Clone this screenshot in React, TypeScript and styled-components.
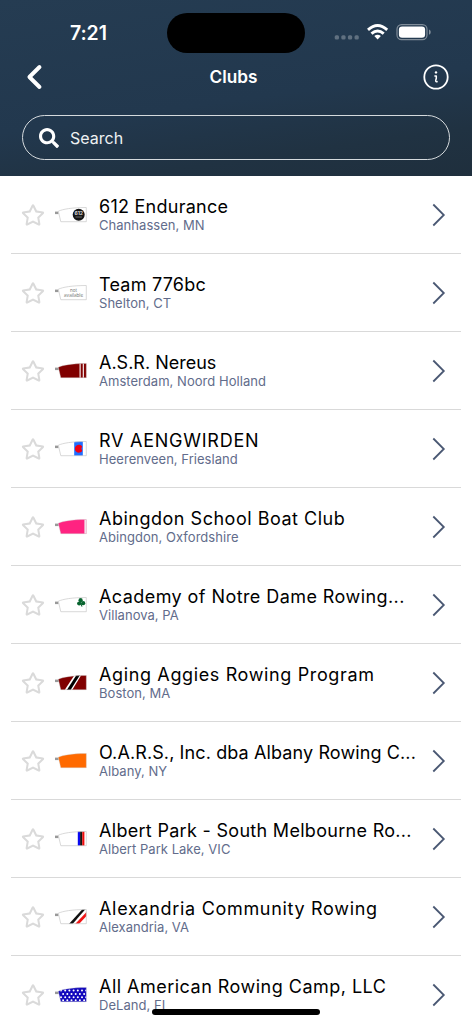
import React from "react";
import styled, { createGlobalStyle } from "styled-components";
import { FaRegStar, FaSearch } from "react-icons/fa";

const GlobalStyle = createGlobalStyle`
  *, *::before, *::after { box-sizing: border-box; }
  html, body { margin: 0; padding: 0; overflow: hidden; }
  body { background: #fff; font-family: Inter, "Liberation Sans", sans-serif; }
`;

const Screen = styled.div`
  position: relative;
  width: 472px;
  height: 1024px;
  overflow: hidden;
  background: #fff;
`;

const Header = styled.header`
  height: 176px;
  padding-top: 12px;
  color: #fff;
  background: linear-gradient(172deg, #253c52 0%, #22384e 55%, #203242 80%, #1f2f3d 100%);
`;

const StatusBar = styled.div`
  display: grid;
  grid-template-columns: 167px 138px 1fr;
  height: 41px;
  align-items: center;
`;

const Clock = styled.time`
  padding-left: 70px;
  font-size: 19.5px;
  font-weight: 600;
  line-height: 24px;
  letter-spacing: -0.1px;
`;

const Island = styled.div`
  height: 40px;
  border-radius: 20px;
  background: #000;
  align-self: center;
`;

const StatusIcons = styled.div`
  display: flex;
  align-items: center;
  padding-left: 29px;
`;

const NavBar = styled.nav`
  display: grid;
  grid-template-columns: 1fr auto 1fr;
  align-items: center;
  height: 48px;
  padding: 0 22px 0 26px;
`;

const NavButton = styled.button<{ $end?: boolean }>`
  display: flex;
  padding: 0;
  border: 0;
  color: inherit;
  background: none;
  justify-self: ${({ $end }) => ($end ? "end" : "start")};
`;

const Title = styled.h1`
  margin: 0 9px 0 0;
  font-size: 17.2px;
  font-weight: 600;
  line-height: 24px;
`;

const SearchField = styled.div`
  display: flex;
  align-items: center;
  height: 45px;
  margin: 14px 22px 0;
  padding-left: 16px;
  gap: 11px;
  border: 1.5px solid #d5dadd;
  border-radius: 23px;
`;

const SearchLabel = styled.span`
  font-size: 16px;
  line-height: 22px;
  color: #eef1f3;
`;

const List = styled.ul`
  margin: 0;
  padding: 0 11px;
  list-style: none;
`;

const Row = styled.li`
  display: flex;
  align-items: center;
  height: 78px;
  padding: 0 15px 0 10px;
  border-bottom: 1px solid #d9d9d9;
`;

const Star = styled(FaRegStar)`
  flex: none;
  width: 24px;
  height: 24px;
  color: #dadada;
`;

const BladeSvg = styled.svg`
  flex: none;
  width: 32px;
  height: 16px;
  margin: 0 12px 0 10px;
`;

const Details = styled.div`
  flex: 1;
  min-width: 0;
  padding-top: 2px;
  white-space: nowrap;
`;

const Name = styled.div<{ $tracking: number }>`
  font-size: 18px;
  font-weight: 400;
  line-height: 20px;
  letter-spacing: ${({ $tracking }) => $tracking}px;
  color: #000;
`;

const Place = styled.div`
  font-size: 13px;
  line-height: 17px;
  letter-spacing: 0.04px;
  color: #626c8b;
`;

const Chevron = styled.svg`
  flex: none;
  width: 14px;
  height: 24px;
`;

const HomeIndicator = styled.div`
  position: absolute;
  left: 152px;
  top: 1009px;
  width: 168px;
  height: 6px;
  border-radius: 3px;
  background: #000;
`;

const outline = "M3.3 4.2 C8 2.2 16 .6 31.3 .5 V14.7 H5.8 Z";

type Club = {
  id: string;
  name: string;
  place: string;
  track: number;
  fill: string;
  art?: React.ReactNode;
};

function Blade({ id, fill, art }: Pick<Club, "id" | "fill" | "art">) {
  return (
    <BladeSvg viewBox="0 0 32 16">
      <clipPath id={id}>
        <path d={outline} />
      </clipPath>
      <rect x="0" y="4.6" width="3.6" height="2.5" fill="#999" />
      <path d={outline} fill={fill} />
      <g clipPath={`url(#${id})`}>{art}</g>
      <path d={outline} fill="none" stroke="#c9c9c9" strokeWidth=".7" opacity={fill === "#fff" ? 1 : 0.5} />
    </BladeSvg>
  );
}

const dots = [3.6, 6.9, 10.2, 13.2].flatMap((y, r) =>
  Array.from({ length: 7 }, (_, i) => (
    <circle key={`${r}-${i}`} cx={6 + i * 4.2 + (r % 2) * 2.1} cy={y} r="1" fill="#fff" />
  ))
);

const clubs: Club[] = [
  {
    id: "endurance", name: "612 Endurance", place: "Chanhassen, MN", track: 0.25, fill: "#fff",
    art: (
      <>
        <circle cx="23.7" cy="7.8" r="6" fill="#151515" />
        <text x="23.7" y="8.2" fontSize="5" fontWeight="700" textAnchor="middle" fill="#ddd">612</text>
        <path d="M20.5 10h6.4" stroke="#aaa" strokeWidth=".6" />
      </>
    ),
  },
  {
    id: "team", name: "Team 776bc", place: "Shelton, CT", track: 0.22, fill: "#fff",
    art: (
      <g fontSize="4.6" textAnchor="middle" fill="#777">
        <text x="18.6" y="6.6">not</text>
        <text x="18.6" y="12.3">available</text>
      </g>
    ),
  },
  {
    id: "nereus", name: "A.S.R. Nereus", place: "Amsterdam, Noord Holland", track: 0, fill: "#800000",
    art: <path d="M25.1 0v16M28.3 0v16" stroke="#fff" strokeWidth="1.1" />,
  },
  {
    id: "aengwirden", name: "RV AENGWIRDEN", place: "Heerenveen, Friesland", track: 0.75, fill: "#fff",
    art: (
      <>
        <rect x="19.2" width="8.6" height="16" fill="#1f6dff" />
        <path d="M27.2 5.4A4 4 0 1 0 27.2 9.9L26.3 7.6Z" fill="#f00014" />
      </>
    ),
  },
  {
    id: "abingdon", name: "Abingdon School Boat Club", place: "Abingdon, Oxfordshire", track: 0.51, fill: "#ff2381",
    art: <rect x="29.4" width="3" height="16" fill="#f4e5ec" />,
  },
  {
    id: "academy", name: "Academy of Notre Dame Rowing...", place: "Villanova, PA", track: 0.43, fill: "#fff",
    art: (
      <g fill="#08642f">
        <circle cx="25.6" cy="3.2" r="2.1" />
        <circle cx="24.2" cy="6.5" r="2.1" />
        <circle cx="28.2" cy="6.2" r="2.1" />
        <path d="M26 5l1.5 4.5-.9.3L25 6z" />
      </g>
    ),
  },
  {
    id: "aggies", name: "Aging Aggies Rowing Program", place: "Boston, MA", track: 0.63, fill: "#800000",
    art: (
      <>
        <path d="M9 16L19.5 0h6.8L16.6 16z" fill="#fff" />
        <path d="M11.2 16L21.5 0h3.5L14.9 16z" fill="#000" />
      </>
    ),
  },
  { id: "oars", name: "O.A.R.S., Inc. dba Albany Rowing C...", place: "Albany, NY", track: 0.11, fill: "#ff6a00" },
  {
    id: "albert", name: "Albert Park - South Melbourne Ro...", place: "Albert Park Lake, VIC", track: 0.3, fill: "#fff",
    art: (
      <>
        <rect x="22.8" width="2.3" height="16" fill="#0808f0" />
        <rect x="25.1" width="2.2" height="16" fill="#111" />
        <rect x="27.3" width="2.1" height="16" fill="#f00a0a" />
      </>
    ),
  },
  {
    id: "alexandria", name: "Alexandria Community Rowing", place: "Alexandria, VA", track: 0.69, fill: "#fff",
    art: (
      <>
        <path d="M13 16L27.6 0h3L16.7 16z" fill="#111" />
        <path d="M19.2 16L32 2.6v4L23 16z" fill="#f01515" />
      </>
    ),
  },
  { id: "american", name: "All American Rowing Camp, LLC", place: "DeLand, FL", track: 0.48, fill: "#1208bd", art: dots },
];

export default function App() {
  return (
    <>
      <GlobalStyle />
      <Screen>
        <Header>
          <StatusBar>
            <Clock>7:21</Clock>
            <Island />
            <StatusIcons>
              <svg width="102" height="20" viewBox="0 0 102 20">
                <g fill="#fff" opacity=".28">
                  <rect x=".7" y="12.2" width="4.3" height="4.3" rx="1.5" />
                  <rect x="7.3" y="12.2" width="4.3" height="4.3" rx="1.5" />
                  <rect x="13.9" y="12.2" width="4.3" height="4.3" rx="1.5" />
                  <rect x="20.5" y="12.2" width="4.3" height="4.3" rx="1.5" />
                </g>
                <g fill="none" stroke="#fff" strokeWidth="2.9">
                  <path d="M34 6.8Q43.6-1.8 53.2 6.8" />
                  <path d="M37.5 10.6Q43.6 5.2 49.7 10.6" />
                </g>
                <path d="M40.3 13.1Q43.6 10.4 46.9 13.1L43.6 16.6Z" fill="#fff" />
                <rect x="63" y="1.6" width="30" height="15" rx="4.6" fill="none" stroke="#fff" strokeOpacity=".42" strokeWidth="1.2" />
                <rect x="64.9" y="3.4" width="26.2" height="11.4" rx="3.2" fill="#fff" />
                <path d="M95.1 6.6c2 .8 2 4.4 0 5.2z" fill="#fff" opacity=".5" />
              </svg>
            </StatusIcons>
          </StatusBar>
          <NavBar>
            <NavButton aria-label="Back">
              <svg width="18" height="28" viewBox="0 0 18 28">
                <path d="M13.5 4L3.4 14l10.1 10" fill="none" stroke="#fff" strokeWidth="3.9" strokeLinecap="round" strokeLinejoin="round" />
              </svg>
            </NavButton>
            <Title>Clubs</Title>
            <NavButton $end aria-label="Information">
              <svg width="28" height="28" viewBox="0 0 28 28" fill="none" stroke="#fff">
                <circle cx="14" cy="14" r="11.7" strokeWidth="1.8" />
                <circle cx="14" cy="9.4" r="1.2" fill="#fff" stroke="none" />
                <path d="M12.4 12.9h1.9v2.3l-.6 2.3q-.2 1.6 2 1.1" strokeWidth="1.5" strokeLinejoin="round" />
              </svg>
            </NavButton>
          </NavBar>
          <SearchField role="search">
            <FaSearch size={20} />
            <SearchLabel>Search</SearchLabel>
          </SearchField>
        </Header>
        <List>
          {clubs.map((club) => (
            <Row key={club.id}>
              <Star />
              <Blade id={club.id} fill={club.fill} art={club.art} />
              <Details>
                <Name $tracking={club.track}>{club.name}</Name>
                <Place>{club.place}</Place>
              </Details>
              <Chevron viewBox="0 0 14 24">
                <path d="M1.3 1.5L11.8 12 1.3 22.5" fill="none" stroke="#4a5873" strokeWidth="1.8" />
              </Chevron>
            </Row>
          ))}
        </List>
        <HomeIndicator />
      </Screen>
    </>
  );
}
